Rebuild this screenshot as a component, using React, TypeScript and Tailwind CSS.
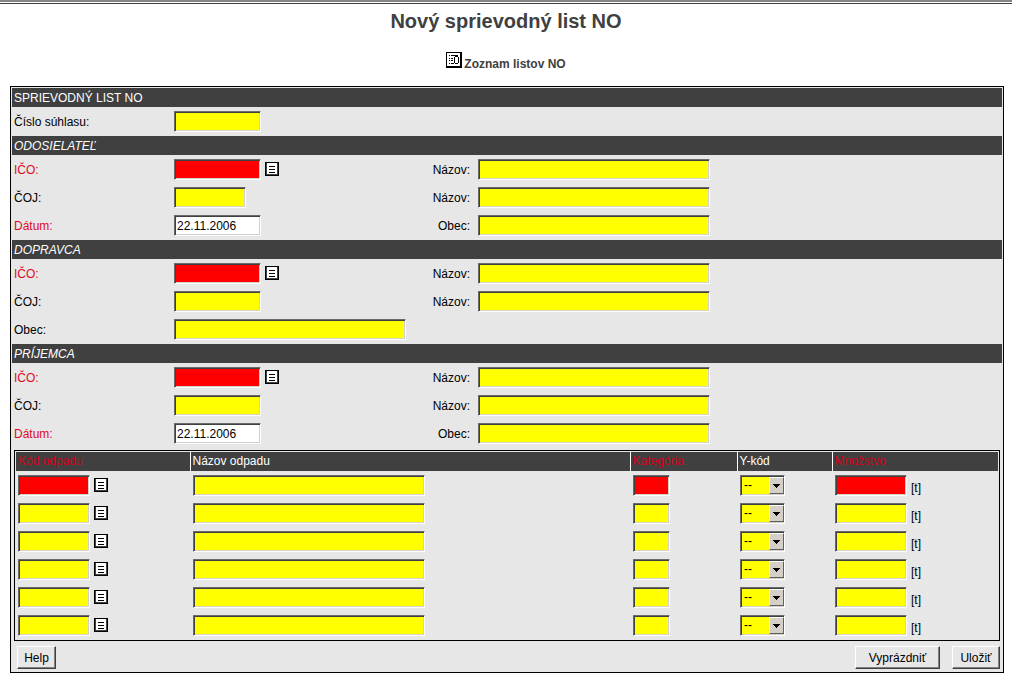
import type { ReactNode } from 'react'

const sunken = 'border border-t-[#6a6a6a] border-l-[#6a6a6a] border-r-white border-b-white'
const inner = 'shadow-[inset_1px_1px_0_#404040,inset_-1px_-1px_0_#d4d0c8]'
const raised =
  'h-[23px] border border-t-white border-l-white border-r-[#404040] border-b-[#404040] bg-[#e7e7e7] shadow-[inset_-1px_-1px_0_#808080] text-center'

const tones = {
  yellow: 'bg-[#ffff00]',
  red: 'bg-[#ff0000]',
  white: 'bg-white',
}

type FieldProps = {
  label: string
  width: string
  tone?: keyof typeof tones
  value?: string
}

function Field({ label, width, tone = 'yellow', value }: FieldProps) {
  return (
    <input
      type="text"
      aria-label={label}
      defaultValue={value}
      className={`block h-[21px] px-0.5 outline-none ${sunken} ${inner} ${tones[tone]} ${width}`}
    />
  )
}

function PickButton({ label }: { label: string }) {
  return (
    <button type="button" aria-label={label} className="mt-[3px] block">
      <svg width="14" height="14" viewBox="0 0 14 14" shapeRendering="crispEdges">
        <rect width="14" height="14" fill="#000" />
        <rect x="1" y="1" width="12" height="12" fill="#444" />
        <rect x="2" y="1" width="10" height="11" fill="#fff" />
        <path d="M4 4h6v1H4zM4 7h6v1H4zM4 10h6v1H4z" fill="#000" />
      </svg>
    </button>
  )
}

function Section({ title, italic = true, children }: { title: string; italic?: boolean; children: ReactNode }) {
  return (
    <section className="pb-px">
      <h2 className={`h-[19px] bg-[#404040] px-0.5 leading-[21px] text-white ${italic ? 'italic' : ''}`}>{title}</h2>
      {children}
    </section>
  )
}

type RowProps = FieldProps & {
  required?: boolean
  pick?: boolean
  right?: string
}

function Row({ label, required, pick, right, ...field }: RowProps) {
  return (
    <div className="flex h-7 items-start pt-1">
      <span className={`w-[162px] shrink-0 pt-[3px] pl-0.5 ${required ? 'text-[#dd0a1e]' : ''}`}>{label}</span>
      <div className="flex w-[232px] shrink-0 items-start gap-1">
        <Field label={label} {...field} />
        {pick && <PickButton label="Vybrať IČO" />}
      </div>
      {right && (
        <label className="flex items-start gap-2">
          <span className="w-16 pt-[3px] text-right">{right}</span>
          <Field label={right} width="w-[232px]" />
        </label>
      )}
    </div>
  )
}

const columns = [
  { title: 'Kód odpadu', width: 'w-[174px]', required: true },
  { title: 'Názov odpadu', width: 'w-[440px]' },
  { title: 'Kategória', width: 'w-[107px]', required: true },
  { title: 'Y-kód', width: 'w-[95px]' },
  { title: 'Množstvo', width: '', required: true },
]

function WasteTable() {
  return (
    <div className="mx-0.5 mt-0.5 border border-black p-px">
      <table className="w-full table-fixed border-collapse">
        <thead>
          <tr className="h-[19px] bg-[#404040] text-left">
            {columns.map((c, i) => (
              <th
                key={c.title}
                className={`py-0 pr-0 pl-0.5 font-normal leading-[19px] ${c.width} ${i ? 'border-l border-white' : ''} ${c.required ? 'text-[#d0021b]' : 'text-white'}`}
              >
                {c.title}
              </th>
            ))}
          </tr>
        </thead>
        <tbody>
          {[0, 1, 2, 3, 4, 5].map(i => {
            const tone = i === 0 ? 'red' : 'yellow'
            return (
              <tr key={i} className="h-7 align-top">
                <td className="p-0 pt-1 pl-0.5">
                  <div className="flex items-start gap-1">
                    <Field label="Kód odpadu" width="w-[72px]" tone={tone} />
                    <PickButton label="Vybrať kód odpadu" />
                  </div>
                </td>
                <td className="p-0 pt-1 pl-[3px]">
                  <Field label="Názov odpadu" width="w-[232px]" />
                </td>
                <td className="p-0 pt-1 pl-[3px]">
                  <Field label="Kategória" width="w-[37px]" tone={tone} />
                </td>
                <td className="p-0 pt-1 pl-[3px]">
                  <div className={`grid h-[21px] w-[45px] bg-[#ffff00] ${sunken}`}>
                    <select
                      aria-label="Y-kód"
                      className={`col-start-1 row-start-1 appearance-none pl-[3px] leading-[19px] outline-none ${inner}`}
                    >
                      <option>--</option>
                    </select>
                    <span className="pointer-events-none col-start-1 row-start-1 my-px flex w-[15px] items-center justify-center justify-self-end border border-t-white border-l-white border-r-[#606060] border-b-[#606060] bg-[#d4d0c8]">
                      <svg width="7" height="4" viewBox="0 0 7 4" shapeRendering="crispEdges">
                        <path d="M0 0h7v1H6v1H5v1H4v1H3V3H2V2H1V1H0z" />
                      </svg>
                    </span>
                  </div>
                </td>
                <td className="p-0 pt-1 pl-[3px]">
                  <div className="flex items-start gap-1">
                    <Field label="Množstvo" width="w-[72px]" tone={tone} />
                    <span className="pt-[5px]">[t]</span>
                  </div>
                </td>
              </tr>
            )
          })}
        </tbody>
      </table>
    </div>
  )
}

export default function App() {
  return (
    <main className="bg-white font-['Liberation_Sans',Arial,sans-serif] text-[12px] leading-4 text-black">
      <div className="h-1 border-t-2 border-b border-t-[#85858a] border-b-[#404040]" />
      <header className="flex flex-col items-center pt-1 text-[#404040]">
        <h1 className="pt-px text-[20px] font-bold leading-6">Nový sprievodný list NO</h1>
        <a href="#zoznam" className="mt-[19px] flex items-start gap-0.5 text-[12px] font-bold">
          <svg width="16" height="16" viewBox="0 0 16 16" shapeRendering="crispEdges">
            <rect width="16" height="16" fill="#000" />
            <rect x="1" y="1" width="13" height="13" fill="#fff" />
            <path
              d="M3 3h1v1H3zM5 3h7v1H5zM3 6h1v1H3zM5 6h2v1H5zM3 8h1v1H3zM5 8h2v1H5zM3 11h1v1H3zM5 11h3v1H5zM9 4h3v1H9zM8 5h1v6H8zM12 5h1v6h-1zM9 11h3v1H9z"
              fill="#000"
            />
          </svg>
          <span className="pt-1">Zoznam listov NO</span>
        </a>
      </header>

      <form className="mt-3.5 mr-2 ml-2.5 border border-black bg-[#e7e7e7] p-px">
        <Section title="SPRIEVODNÝ LIST NO" italic={false}>
          <Row label="Číslo súhlasu:" width="w-[87px]" />
        </Section>
        <Section title="ODOSIELATEĽ">
          <Row label="IČO:" width="w-[87px]" tone="red" required pick right="Názov:" />
          <Row label="ČOJ:" width="w-[72px]" right="Názov:" />
          <Row label="Dátum:" width="w-[87px]" tone="white" value="22.11.2006" required right="Obec:" />
        </Section>
        <Section title="DOPRAVCA">
          <Row label="IČO:" width="w-[87px]" tone="red" required pick right="Názov:" />
          <Row label="ČOJ:" width="w-[87px]" right="Názov:" />
          <Row label="Obec:" width="w-[232px]" />
        </Section>
        <Section title="PRÍJEMCA">
          <Row label="IČO:" width="w-[87px]" tone="red" required pick right="Názov:" />
          <Row label="ČOJ:" width="w-[87px]" right="Názov:" />
          <Row label="Dátum:" width="w-[87px]" tone="white" value="22.11.2006" required right="Obec:" />
        </Section>
        <WasteTable />
        <div className="flex items-center px-0.5 pt-[5px] pb-0.5">
          <button type="button" className={`ml-[3px] w-[39px] ${raised}`}>Help</button>
          <button type="reset" className={`mr-3 ml-auto w-[85px] ${raised}`}>Vyprázdniť</button>
          <button type="submit" className={`w-12 ${raised}`}>Uložiť</button>
        </div>
      </form>
    </main>
  )
}
